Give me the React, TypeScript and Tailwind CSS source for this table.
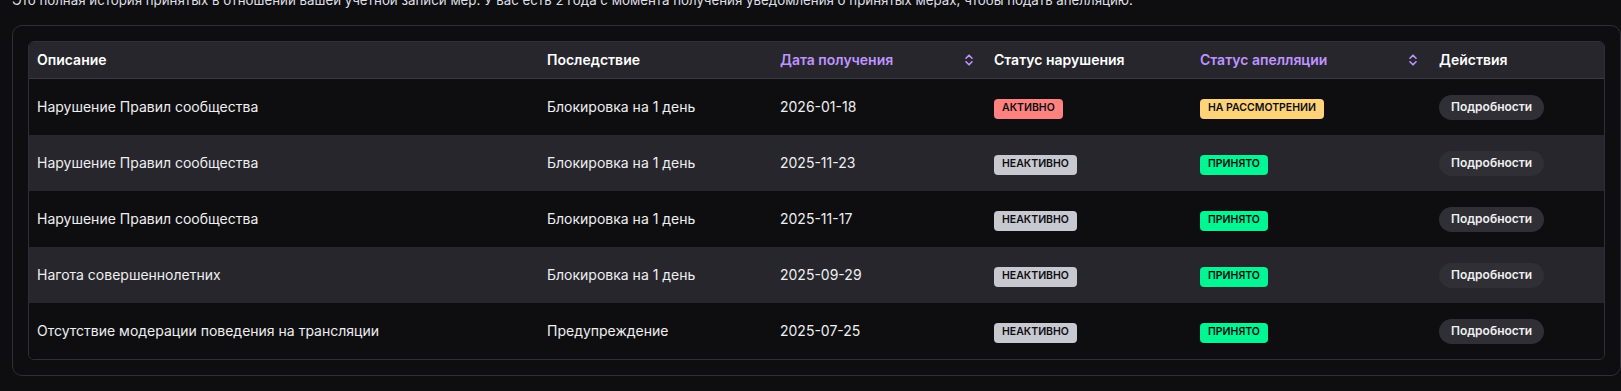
import React from "react";

type Row = {
  desc: string;
  cons: string;
  date: string;
  status: "active" | "inactive";
  appeal: "pending" | "accepted";
};

const rows: Row[] = [
  { desc: "Нарушение Правил сообщества", cons: "Блокировка на 1 день", date: "2026-01-18", status: "active", appeal: "pending" },
  { desc: "Нарушение Правил сообщества", cons: "Блокировка на 1 день", date: "2025-11-23", status: "inactive", appeal: "accepted" },
  { desc: "Нарушение Правил сообщества", cons: "Блокировка на 1 день", date: "2025-11-17", status: "inactive", appeal: "accepted" },
  { desc: "Нагота совершеннолетних", cons: "Блокировка на 1 день", date: "2025-09-29", status: "inactive", appeal: "accepted" },
  { desc: "Отсутствие модерации поведения на трансляции", cons: "Предупреждение", date: "2025-07-25", status: "inactive", appeal: "accepted" },
];

function SortIcon() {
  return (
    <svg width="8" height="12" viewBox="0 0 8 12" fill="none" className="shrink-0">
      <path d="M1 4.2 L4 1.2 L7 4.2" stroke="#bf94ff" strokeWidth="1.6" strokeLinecap="round" strokeLinejoin="round" />
      <path d="M1 7.8 L4 10.8 L7 7.8" stroke="#bf94ff" strokeWidth="1.6" strokeLinecap="round" strokeLinejoin="round" />
    </svg>
  );
}

function Badge({ kind }: { kind: "active" | "inactive" | "pending" | "accepted" }) {
  const map = {
    active: { cls: "bg-[#ff8280]", text: "АКТИВНО" },
    inactive: { cls: "bg-[#c8c8d0]", text: "НЕАКТИВНО" },
    pending: { cls: "bg-[#ffd37a]", text: "НА РАССМОТРЕНИИ" },
    accepted: { cls: "bg-[#00f593]", text: "ПРИНЯТО" },
  } as const;
  const m = map[kind];
  return (
    <span className={`inline-flex h-[20px] items-center rounded-[4px] px-[8px] text-[10.5px] font-semibold leading-none text-[#0e0e10] ${m.cls}`}>
      {m.text}
    </span>
  );
}

const gridCols = "grid grid-cols-[510px_233px_214px_206px_239px_1fr]";

export default function App() {
  return (
    <div
      className="min-h-[391px] overflow-hidden bg-[#0e0e10] pl-[12px] text-[#efeff1]"
      style={{ fontFamily: "Inter, 'Noto Sans', sans-serif" }}
    >
      <p className="-mt-[10px] text-[13.3px] leading-[20px] text-[#dedee3]">
        Это полная история принятых в отношении вашей учетной записи мер. У вас есть 2 года с момента получения уведомления о принятых мерах, чтобы подать апелляцию.
      </p>
      <div className="mt-[15px] rounded-[10px] border border-[#2f2f35] bg-[#0e0e10] p-[15px]">
        <div className="overflow-hidden rounded-[6px] border border-[#2f2f35]">
          <div className={`${gridCols} h-[37px] items-center border-b border-[#3a3a40] bg-[#26262c] text-[14px] font-semibold text-white`}>
            <div className="pl-[8px] pb-[1px]">Описание</div>
            <div className="pl-[8px] pb-[1px]">Последствие</div>
            <div className="flex items-center justify-between pl-[8px] pr-[13px] text-[#bf94ff]">
              <span className="pb-[1px]">Дата получения</span>
              <SortIcon />
            </div>
            <div className="pl-[8px] pb-[1px]">Статус нарушения</div>
            <div className="flex items-center justify-between pl-[8px] pr-[14px] text-[#bf94ff]">
              <span className="pb-[1px]">Статус апелляции</span>
              <SortIcon />
            </div>
            <div className="pl-[8px] pb-[1px]">Действия</div>
          </div>
          {rows.map((r, i) => (
            <div
              key={i}
              className={`${gridCols} h-[56px] items-center text-[14px] text-[#efeff1] ${i % 2 === 1 ? "bg-[#26262c]" : "bg-[#0e0e10]"}`}
            >
              <div className="pl-[8px] pb-[1px]">{r.desc}</div>
              <div className="pl-[8px] pb-[1px]">{r.cons}</div>
              <div className="pl-[8px] pb-[1px]">{r.date}</div>
              <div className="pl-[8px]">
                <Badge kind={r.status} />
              </div>
              <div className="pl-[8px]">
                <Badge kind={r.appeal} />
              </div>
              <div className="pl-[8px]">
                <button className="h-[25px] rounded-full bg-[#2f2f35] px-[12px] text-[12px] font-semibold text-[#efeff1]">
                  Подробности
                </button>
              </div>
            </div>
          ))}
        </div>
      </div>
    </div>
  );
}
